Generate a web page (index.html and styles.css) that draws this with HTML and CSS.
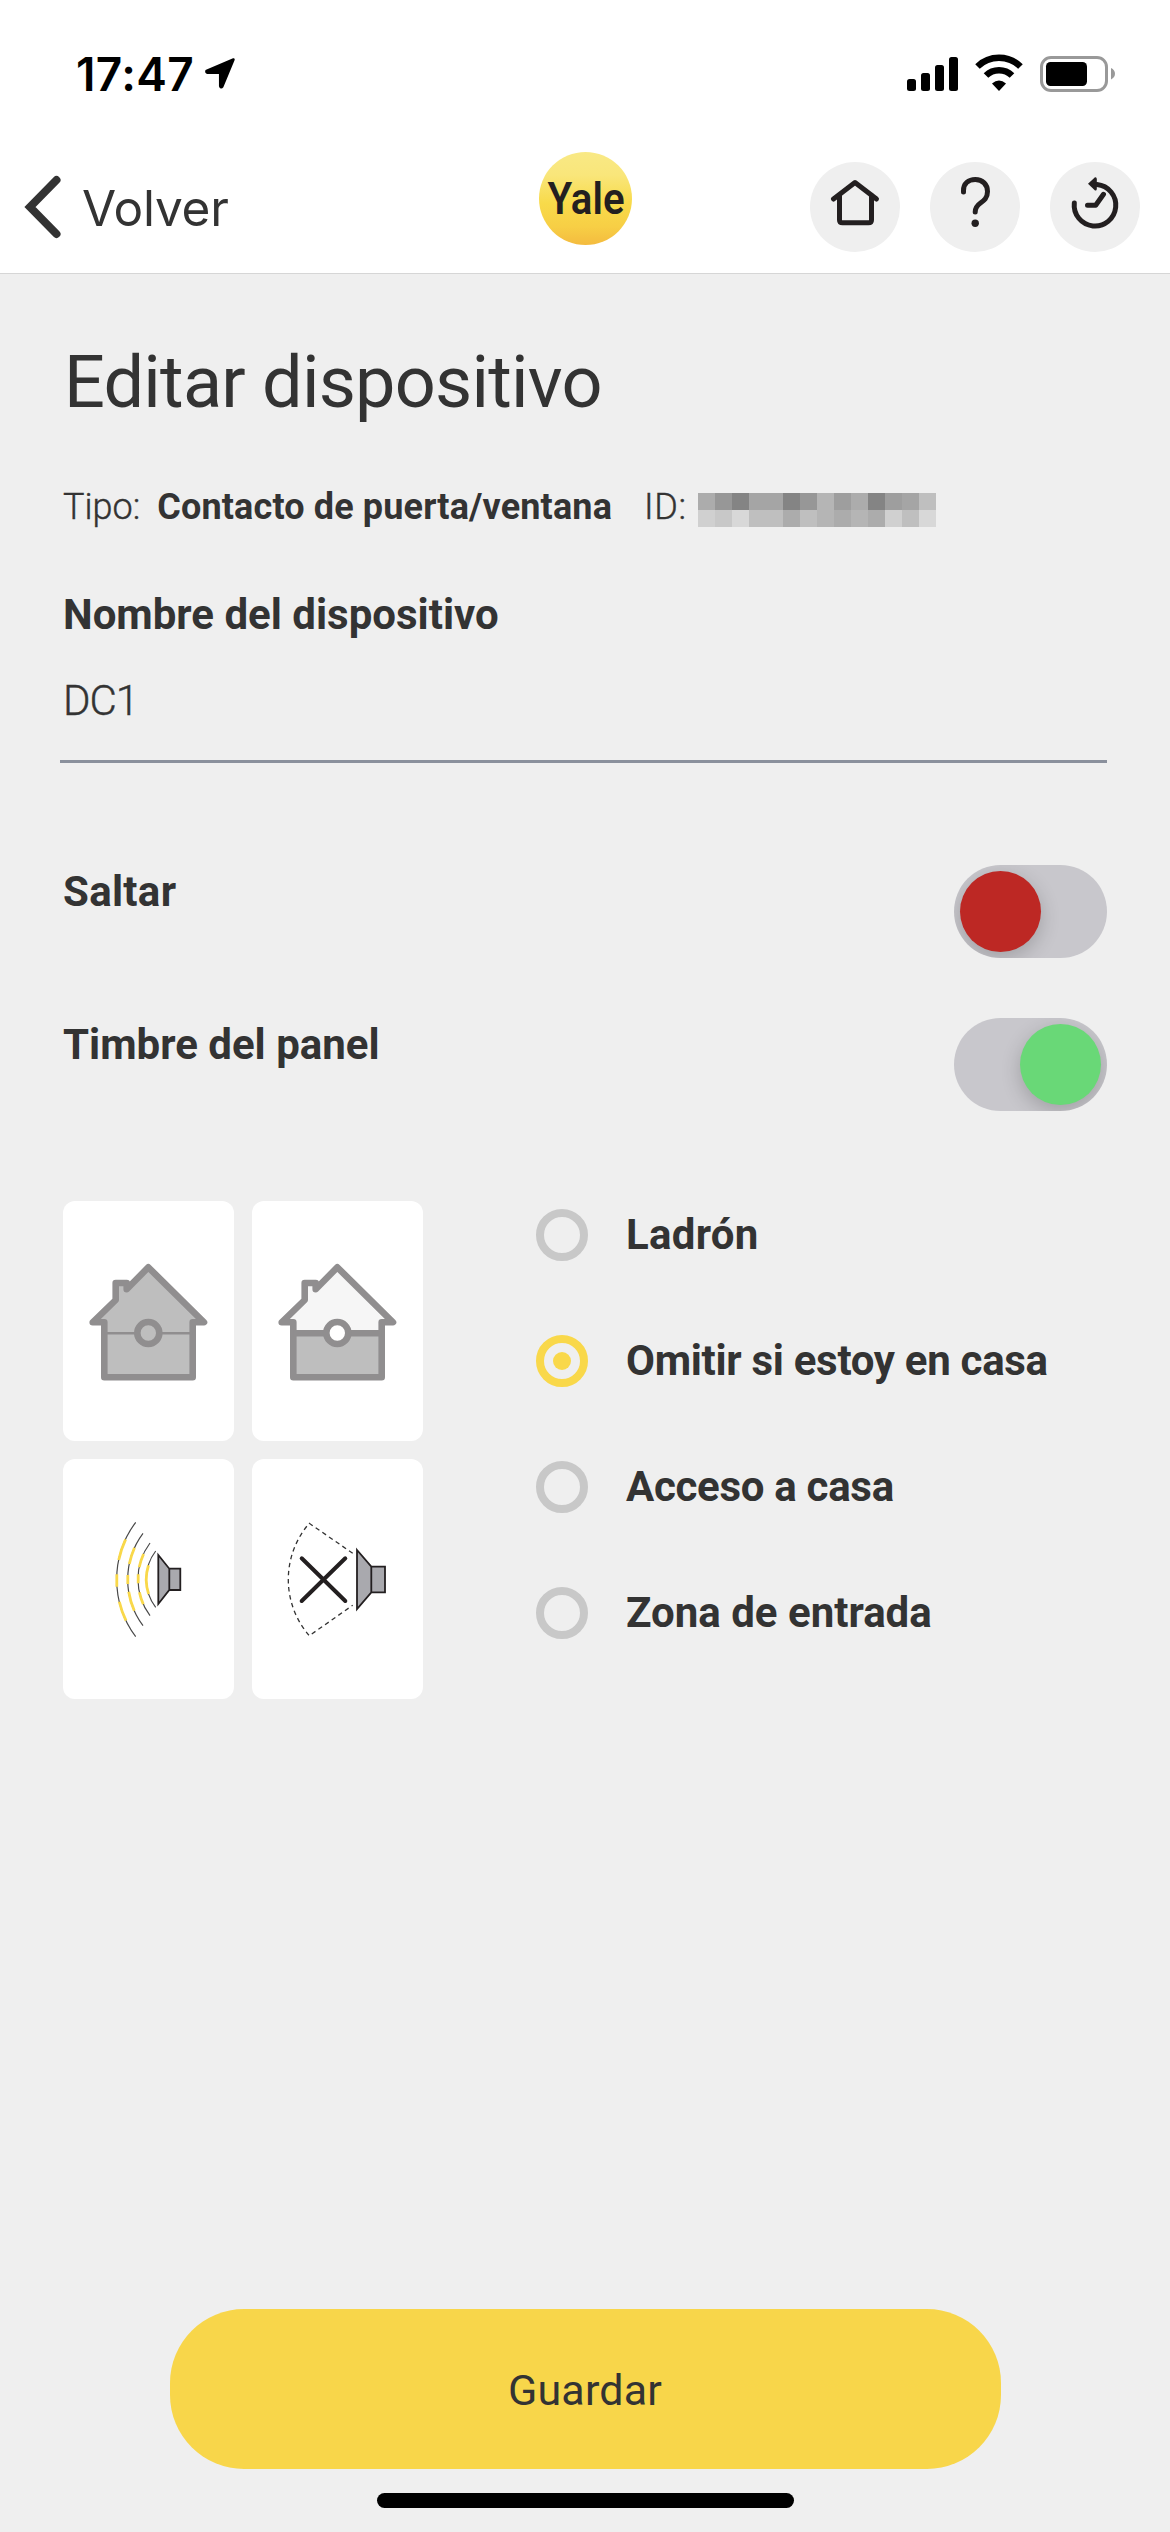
FILE: index.html
```html
<!DOCTYPE html>
<html lang="es">
<head>
<meta charset="utf-8">
<title>Editar dispositivo</title>
<link rel="stylesheet" href="styles.css">
</head>
<body>
<header class="top">
  <div class="status">
    <div class="status-left">
      <span class="clock">17:47</span>
      <svg class="location" width="32" height="34" viewBox="0 0 32 34"><path d="M29.500 2.500L2.500 14Q2 15.500 3.500 15.800H16.200V29Q17 31.300 18.300 29.500Z" fill="#000" stroke="#000" stroke-width="2.500" stroke-linejoin="round"/></svg>
    </div>
    <svg class="status-icons" width="209" height="38" viewBox="0 0 209 38">
      <rect x="0" y="25" width="9" height="12" rx="2.500"/><rect x="14" y="19" width="9" height="18" rx="2.500"/><rect x="28" y="11" width="9" height="26" rx="2.500"/><rect x="42" y="3" width="9" height="34" rx="2.500"/>
      <g fill="none" stroke="#000" stroke-width="6.500"><path d="M70.500 12.500A31 31 0 0 1 113.500 12.500"/><path d="M79 21.500A18.500 18.500 0 0 1 105 21.500"/></g>
      <path d="M85 29.500Q92 23.500 99 29.500L92 37Z"/>
      <rect x="134.500" y="3.500" width="65" height="33" rx="9.500" fill="none" stroke="#999" stroke-width="3"/>
      <rect x="139" y="8" width="41" height="24" rx="4.500"/>
      <path d="M204 14Q208 16 208 19.700T204 25.400Z" fill="#999"/>
    </svg>
  </div>
  <nav class="bar">
    <a class="back"><svg width="38" height="64" viewBox="0 0 38 64"><path d="M32.500 5L6 32L32.500 59" fill="none" stroke="#333" stroke-width="8" stroke-linecap="round"/></svg><span>Volver</span></a>
    <svg class="logo" width="93" height="93" viewBox="0 0 93 93">
      <defs><linearGradient id="gold" x1="0" y1="0" x2="0" y2="1"><stop offset="0" stop-color="#f9e985"/><stop offset=".25" stop-color="#f9e67a"/><stop offset=".55" stop-color="#f8da4a"/><stop offset=".8" stop-color="#f7cf45"/><stop offset="1" stop-color="#f4bb3f"/></linearGradient></defs>
      <circle cx="46.500" cy="46.500" r="46.500" fill="url(#gold)"/>
      <text class="logo-text" x="8.500" y="61.500" textLength="77" lengthAdjust="spacingAndGlyphs">Yale</text>
    </svg>
    <div class="actions">
      <a class="round"><svg width="90" height="90" viewBox="0 0 90 90"><path d="M23.500 37L45 20.500L66.500 37M29.500 33V58Q29.500 60.800 32.500 60.800H58.500Q61.500 60.800 61.500 58V33"/></svg></a>
      <a class="round"><svg width="90" height="90" viewBox="0 0 90 90"><path d="M33.500 30V28.500C33.500 21.500 38.500 17.500 45.300 17.500C52.500 17.500 57.500 22.500 57.500 29.500C57.500 36 54 38.500 50.500 41C47 43.500 45.200 46 45.200 50"/><circle class="solid" cx="45.200" cy="61.300" r="3.700"/></svg></a>
      <a class="round"><svg width="90" height="90" viewBox="0 0 90 90"><path d="M24.300 41A20.800 20.800 0 1 0 47 22.500M37.500 43.300H45.700L53.500 32.300"/><path class="solid" d="M38 21.700L45 15.300Q46.800 15 46.800 17V27Q46.600 29 45 28.500Z"/></svg></a>
    </div>
  </nav>
</header>
<main class="page">
  <h1>Editar dispositivo</h1>
  <p class="meta"><span class="type-label">Tipo:</span><b>Contacto de puerta/ventana</b><span class="id-label">ID:</span>
    <span class="mask"><i class="a6"></i><i class="a3"></i><i class="a1"></i><i class="a5"></i><i class="a5"></i><i class="a1"></i><i class="a3"></i><i class="a7"></i><i class="a4"></i><i class="a6"></i><i class="a1"></i><i class="a4"></i><i class="a5"></i><i class="a8"></i><i class="a10"></i><i class="a9"></i><i class="a11"></i><i class="a8"></i><i class="a8"></i><i class="a6"></i><i class="a8"></i><i class="a7"></i><i class="a6"></i><i class="a7"></i><i class="a6"></i><i class="a10"></i><i class="a8"></i><i class="a11"></i></span></p>
  <label class="field"><span class="field-label">Nombre del dispositivo</span><span class="field-value">DC1</span></label>
  <div class="switch-row"><span class="label-wide">Saltar</span><span class="switch"><i></i></span></div>
  <div class="switch-row"><span>Timbre del panel</span><span class="switch on"><i></i></span></div>
  <section class="zone">
    <div class="cards">
      <svg class="card" viewBox="0 0 171 240"><g class="house"><path class="body" d="M85.300 66.300L141 121.300H129.700V176.300H41.300V121.300H29.700L52.700 99V82H63.700V88.300Z"/><path class="thin" d="M41.300 132.300H129.700"/><circle class="body" cx="85.300" cy="132" r="11"/></g></svg>
      <svg class="card" viewBox="0 0 171 240"><g class="house"><path fill="#f6f6f6" stroke="none" d="M85.300 66.300L141 121.300H129.700V132.300H41.300V121.300H29.700L52.700 99V82H63.700V88.300Z"/><path fill="#bebebe" stroke="none" d="M41.300 132.300H129.700V176.300H41.300Z"/><path d="M85.300 66.300L141 121.300H129.700V176.300H41.300V121.300H29.700L52.700 99V82H63.700V88.300Z"/><path d="M41.300 132.300H129.700"/><circle fill="#fff" cx="85.300" cy="132" r="11"/></g></svg>
      <svg class="card" viewBox="0 0 171 240">
        <g class="wave"><path d="M72.700 63.300A95.600 95.600 0 0 0 72.700 177.700"/><path d="M80 74.300A77.400 77.400 0 0 0 80 166.700"/><path d="M87 84A61 61 0 0 0 87 156.700"/><path d="M92.700 92A46.500 46.500 0 0 0 92.700 148.300"/></g>
        <g class="pulse"><path d="M62.600 80.300A95.600 95.600 0 0 0 55.700 101M53.800 115.300V127.700M56.300 142.700A95.600 95.600 0 0 0 63 161.700"/><path d="M71.500 88.700A77.400 77.400 0 0 0 66.300 105M64.800 116V125M65.700 132.700A77.400 77.400 0 0 0 71.300 151.700"/><path d="M80.600 95A61 61 0 0 0 76.200 108.300M75.200 115.300V124.300M76.400 133.300A61 61 0 0 0 80.300 145.300"/><path d="M85.500 106.300A46.500 46.500 0 0 0 85.600 135"/></g>
        <path class="speaker" d="M95.300 96L106.300 109.700H117.300V131H106.300L95.300 145ZM106.300 109.700V131"/>
      </svg>
      <svg class="card" viewBox="0 0 171 240">
        <path class="range" d="M100.700 94.300L57.300 64.300A85.700 85.700 0 0 0 57.300 176.700L100.700 146.300"/>
        <path class="cross" d="M49.700 99.300L93.300 142M93.300 99.300L49.700 142"/>
        <path class="speaker" d="M105 91L119.300 107.700H133V133.300H119.300L105 150ZM119.300 107.700V133.300"/>
      </svg>
    </div>
    <ul class="options">
      <li><i></i><span class="label-wide">Ladrón</span></li>
      <li class="picked"><i></i><span class="label-tight">Omitir si estoy en casa</span></li>
      <li><i></i><span class="label-tight">Acceso a casa</span></li>
      <li><i></i><span>Zona de entrada</span></li>
    </ul>
  </section>
</main>
<footer class="bottom"><a class="save">Guardar</a><div class="home-bar"></div></footer>
</body>
</html>
```
FILE: styles.css
```css
* { box-sizing: border-box; }
body { margin: 0; width: 1170px; height: 2532px; display: flex; flex-direction: column; background: #efefef; color: #333; font-family: Roboto, "Liberation Sans", sans-serif; }
i { font-style: normal; }
svg { display: block; flex: none; }

.top { height: 274px; background: #fff; border-bottom: 1px solid #d6d6d6; }
.status { height: 140px; padding: 54px 54px 0 76px; display: flex; justify-content: space-between; color: #000; }
.status-left { display: flex; gap: 10px; }
.clock { font: 600 46px/41px Inter, sans-serif; letter-spacing: .4px; }
.location { margin-top: 3px; }
.bar { height: 133px; padding: 0 30px 0 24px; display: grid; grid-template-columns: 1fr 93px 1fr; }
.back { display: flex; gap: 20px; padding-top: 35px; font: 400 49.5px/66px Inter, sans-serif; letter-spacing: -.2px; }
.logo { margin-top: 12px; margin-left: 3px; }
.logo-text { font: 600 43.5px Roboto, sans-serif; fill: #231f20; }
.actions { display: flex; justify-content: flex-end; gap: 30px; padding-top: 22px; }
.round { width: 90px; height: 90px; border-radius: 50%; background: #efefef; }
.round path { fill: none; stroke: #231f20; stroke-width: 5px; stroke-linecap: round; stroke-linejoin: round; }
.round .solid { fill: #231f20; stroke: none; }

.page { flex: 1; padding: 60px 63px 0; }
h1 { margin: 0; padding-left: 1px; font-size: 72px; line-height: 98px; height: 96px; font-weight: 400; letter-spacing: -.75px; }
.meta { margin: 51px 0 0; height: 52px; display: flex; align-items: center; font-size: 36px; line-height: 52px; }
.type-label, .id-label { font-weight: 300; -webkit-text-stroke: .4px #333; }
.meta b { margin-left: 17px; letter-spacing: .14px; }
.id-label { margin-left: 32px; letter-spacing: .6px; }
.mask { display: grid; grid-template-columns: repeat(14, 17px); grid-auto-rows: 17px; margin: 6px 0 0 11px; }
.a1 { background: #848484; } .a3 { background: #979797; } .a4 { background: #9e9e9e; } .a5 { background: #a5a5a5; }
.a6 { background: #acacac; } .a7 { background: #b5b5b5; } .a8 { background: #bfbfbf; } .a9 { background: #c8c8c8; }
.a10 { background: #d0d0d0; } .a11 { background: #d8d8d8; }
.field { display: block; margin: 54px 0 102px -3px; padding-left: 3px; height: 176px; border-bottom: 3px solid #8a909c; }
.field span { display: block; font-size: 42px; line-height: 56px; }
.field .field-label { font-weight: 700; }
.field .field-value { margin-top: 30px; font-weight: 300; letter-spacing: -1px; -webkit-text-stroke: .4px #333; }
.switch-row { height: 153px; display: flex; justify-content: space-between; font-size: 42px; line-height: 54px; font-weight: 700; }
.label-wide { letter-spacing: .3px; }
.label-tight { letter-spacing: -.3px; }
.switch { width: 153px; height: 93px; padding: 6px; border-radius: 47px; background: #c8c7cc; display: flex; overflow: hidden; }
.switch i { width: 81px; height: 81px; border-radius: 50%; background: #bd2824; box-shadow: 0 6px 20px rgba(0, 0, 0, .2); }
.switch.on { justify-content: flex-end; }
.switch.on i { background: #69d877; }
.zone { display: flex; gap: 113px; padding-top: 30px; }
.cards { display: grid; grid-template-columns: 171px 171px; gap: 18px; }
.card { width: 171px; height: 240px; background: #fff; border-radius: 12px; }
.house { fill: none; stroke: #908e8f; stroke-width: 6.6px; stroke-linejoin: round; }
.house .body { fill: #bebebe; }
.house .thin { stroke-width: 2.6px; }
.wave { fill: none; stroke: #4a4a4a; stroke-width: 1.2px; }
.pulse { fill: none; stroke: #f9d84a; stroke-width: 2.8px; }
.speaker { fill: #a9a9ae; stroke: #231f20; stroke-width: 1.8px; }
.range { fill: none; stroke: #333; stroke-width: 1.3px; stroke-dasharray: 4.5 3.6; }
.cross { fill: none; stroke: #231f20; stroke-width: 4px; stroke-linecap: round; }
.options { list-style: none; margin: 8px 0 0; padding: 0; display: flex; flex-direction: column; gap: 74px; font-size: 42px; line-height: 52px; font-weight: 700; }
.options li { display: flex; gap: 38px; }
.options i { width: 52px; height: 52px; border: 8px solid #c8c8c8; border-radius: 50%; display: grid; place-items: center; }
.options .picked i { border-color: #f9d84a; }
.picked i::before { content: ""; width: 18px; height: 18px; border-radius: 50%; background: #f9d84a; }
.bottom { height: 223px; display: flex; flex-direction: column; align-items: center; gap: 24px; }
.save { width: 831px; height: 160px; border-radius: 74px; background: #f8d64a; font-size: 43px; line-height: 162px; text-align: center; letter-spacing: .2px; }
.home-bar { width: 417px; height: 15px; border-radius: 8px; background: #000; }
```
